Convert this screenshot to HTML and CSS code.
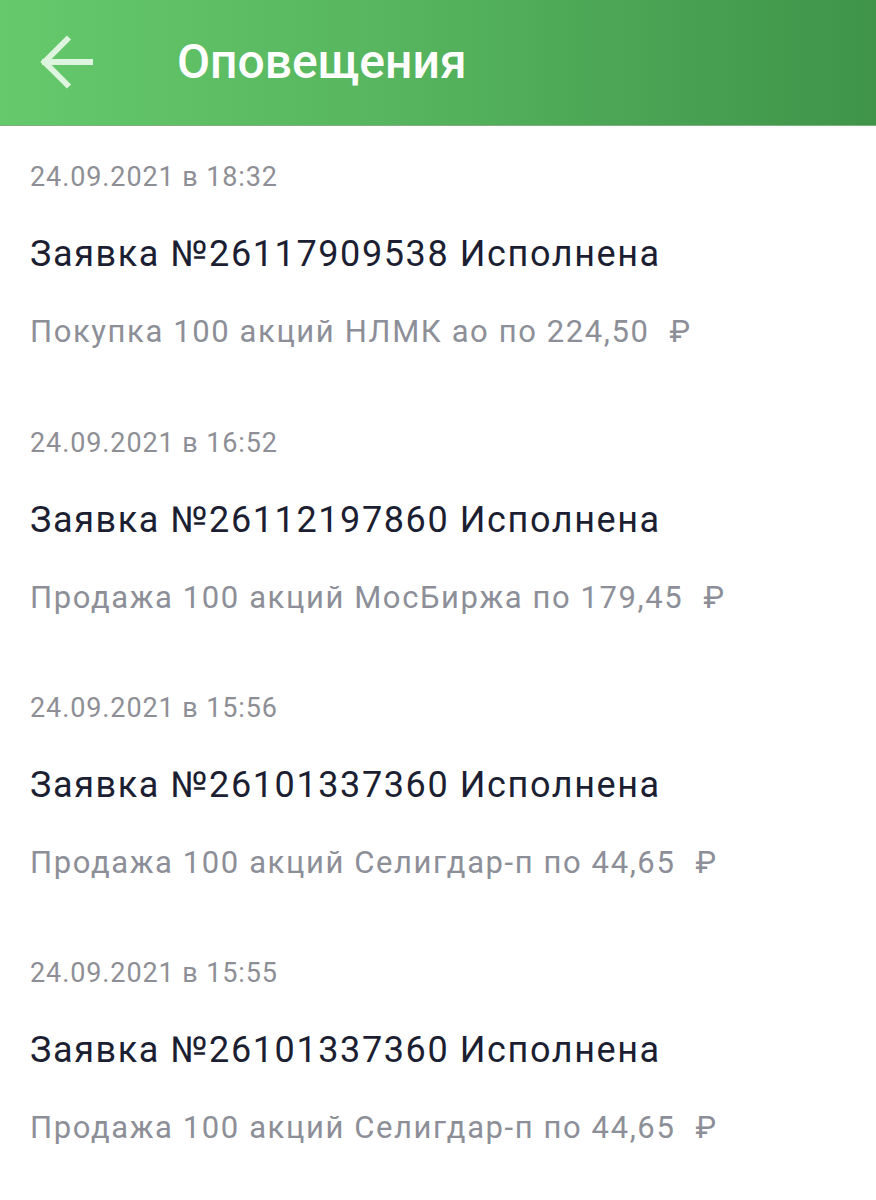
FILE: index.html
```html
<!DOCTYPE html>
<html lang="ru">
<head>
<meta charset="utf-8">
<link rel="stylesheet" href="styles.css">
</head>
<body>
<header class="bar">
  <svg class="back" width="60" height="60" viewBox="0 0 60 60">
    <path d="M4 30H55M31 5.5L6.5 30L31 54.5" fill="none" stroke="#ddf4de" stroke-width="6" stroke-linecap="butt" stroke-linejoin="miter"/>
  </svg>
  <h1 class="title">Оповещения</h1>
</header>
<main class="list">
  <section class="item">
    <div class="date">24.09.2021 в 18:32</div>
    <div class="head">Заявка №26117909538 Исполнена</div>
    <div class="desc">Покупка 100 акций НЛМК ао по 224,50<span class="rub">₽</span></div>
  </section>
  <section class="item">
    <div class="date">24.09.2021 в 16:52</div>
    <div class="head">Заявка №26112197860 Исполнена</div>
    <div class="desc">Продажа 100 акций МосБиржа по 179,45<span class="rub">₽</span></div>
  </section>
  <section class="item">
    <div class="date">24.09.2021 в 15:56</div>
    <div class="head">Заявка №26101337360 Исполнена</div>
    <div class="desc">Продажа 100 акций Селигдар-п по 44,65<span class="rub">₽</span></div>
  </section>
  <section class="item">
    <div class="date">24.09.2021 в 15:55</div>
    <div class="head">Заявка №26101337360 Исполнена</div>
    <div class="desc">Продажа 100 акций Селигдар-п по 44,65<span class="rub">₽</span></div>
  </section>
</main>
</body>
</html>
```
FILE: styles.css
```css
html, body {
  margin: 0;
  padding: 0;
  background: #ffffff;
  font-family: Roboto, "Noto Sans", "Liberation Sans", sans-serif;
}
.bar {
  height: 126px;
  box-sizing: border-box;
  display: flex;
  align-items: center;
  padding-left: 38px;
  padding-bottom: 2px;
  background: linear-gradient(90deg, #66c96c 0%, #56b55e 45%, #3f944a 100%);
  border-bottom: 1px solid #7fae80;
}
.back {
  display: block;
  margin-right: 79px;
}
.title {
  margin: 0;
  color: #ffffff;
  font-size: 48px;
  font-weight: 500;
  letter-spacing: 0;
}
.list {
  padding: 0 30px;
}
.item {
  height: 265px;
  box-sizing: border-box;
  padding-top: 34px;
}
.item:first-child {
  padding-top: 33px;
}
.date {
  font-size: 27px;
  line-height: 36px;
  letter-spacing: 0.9px;
  color: #8e8f96;
}
.head {
  margin-top: 37px;
  font-size: 36px;
  line-height: 44px;
  letter-spacing: 1.6px;
  color: #1c1e32;
}
.desc {
  margin-top: 36px;
  font-size: 31px;
  line-height: 40px;
  letter-spacing: 1.6px;
  color: #8d8f98;
}
.rub {
  margin-left: 20px;
}
```
